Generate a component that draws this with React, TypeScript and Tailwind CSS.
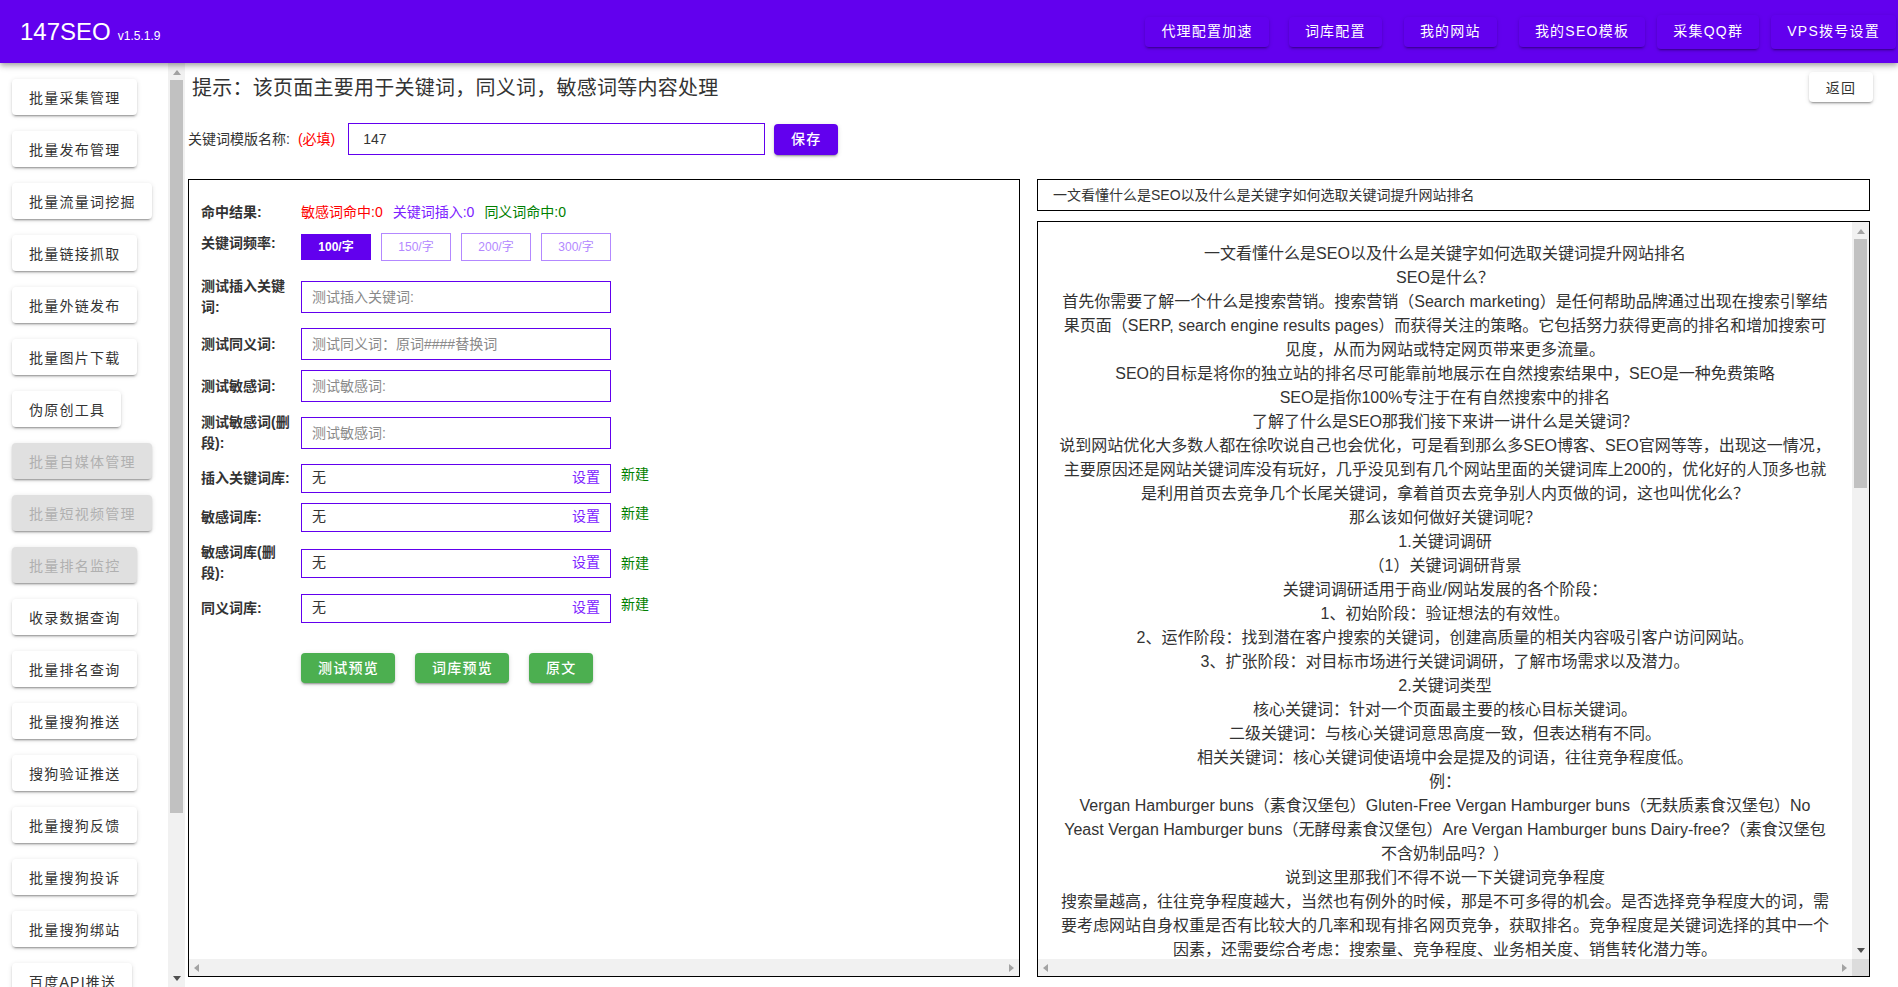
import React from "react";

const raised =
  "shadow-[0_3px_1px_-2px_rgba(0,0,0,0.2),0_2px_2px_0_rgba(0,0,0,0.14),0_1px_5px_0_rgba(0,0,0,0.12)]";

const sideItems: [string, boolean][] = [
  ["批量采集管理", false],
  ["批量发布管理", false],
  ["批量流量词挖掘", false],
  ["批量链接抓取", false],
  ["批量外链发布", false],
  ["批量图片下载", false],
  ["伪原创工具", false],
  ["批量自媒体管理", true],
  ["批量短视频管理", true],
  ["批量排名监控", true],
  ["收录数据查询", false],
  ["批量排名查询", false],
  ["批量搜狗推送", false],
  ["搜狗验证推送", false],
  ["批量搜狗反馈", false],
  ["批量搜狗投诉", false],
  ["批量搜狗绑站", false],
  ["百度API推送", false],
];

const paragraphs = [
  "一文看懂什么是SEO以及什么是关键字如何选取关键词提升网站排名",
  "SEO是什么？",
  "首先你需要了解一个什么是搜索营销。搜索营销（Search marketing）是任何帮助品牌通过出现在搜索引擎结果页面（SERP, search engine results pages）而获得关注的策略。它包括努力获得更高的排名和增加搜索可见度，从而为网站或特定网页带来更多流量。",
  "SEO的目标是将你的独立站的排名尽可能靠前地展示在自然搜索结果中，SEO是一种免费策略",
  "SEO是指你100%专注于在有自然搜索中的排名",
  "了解了什么是SEO那我们接下来讲一讲什么是关键词？",
  "说到网站优化大多数人都在徐吹说自己也会优化，可是看到那么多SEO博客、SEO官网等等，出现这一情况，主要原因还是网站关键词库没有玩好，几乎没见到有几个网站里面的关键词库上200的，优化好的人顶多也就是利用首页去竞争几个长尾关键词，拿着首页去竞争别人内页做的词，这也叫优化么？",
  "那么该如何做好关键词呢？",
  "1.关键词调研",
  "（1）关键词调研背景",
  "关键词调研适用于商业/网站发展的各个阶段：",
  "1、初始阶段：验证想法的有效性。",
  "2、运作阶段：找到潜在客户搜索的关键词，创建高质量的相关内容吸引客户访问网站。",
  "3、扩张阶段：对目标市场进行关键词调研，了解市场需求以及潜力。",
  "2.关键词类型",
  "核心关键词：针对一个页面最主要的核心目标关键词。",
  "二级关键词：与核心关键词意思高度一致，但表达稍有不同。",
  "相关关键词：核心关键词使语境中会是提及的词语，往往竞争程度低。",
  "例：",
  "Vergan Hamburger buns（素食汉堡包）Gluten-Free Vergan Hamburger buns（无麸质素食汉堡包）No Yeast Vergan Hamburger buns（无酵母素食汉堡包）Are Vergan Hamburger buns Dairy-free?（素食汉堡包不含奶制品吗？）",
  "说到这里那我们不得不说一下关键词竞争程度",
  "搜索量越高，往往竞争程度越大，当然也有例外的时候，那是不可多得的机会。是否选择竞争程度大的词，需要考虑网站自身权重是否有比较大的几率和现有排名网页竞争，获取排名。竞争程度是关键词选择的其中一个因素，还需要综合考虑：搜索量、竞争程度、业务相关度、销售转化潜力等。",
];

function Arrow({ dir, dark }: { dir: "up" | "down" | "left" | "right"; dark?: boolean }) {
  const pts = {
    up: "4,2 0,7 8,7",
    down: "0,1 8,1 4,6",
    left: "6,0 6,8 1,4",
    right: "2,0 2,8 7,4",
  }[dir];
  return (
    <svg width="8" height="8" viewBox="0 0 8 8" className="block">
      <polygon points={pts} fill={dark ? "#505050" : "#a3a3a3"} />
    </svg>
  );
}

function VBar({ thumb, grow, downDark, upDark }: { thumb: number; grow?: boolean; downDark?: boolean; upDark?: boolean }) {
  return (
    <div className={`w-[17px] shrink-0 bg-[#f1f1f1] flex flex-col ${grow ? "h-full" : ""}`}>
      <div className="h-[17px] shrink-0 flex items-center justify-center">
        <Arrow dir="up" dark={upDark} />
      </div>
      <div className="flex-1 min-h-0 px-[2px]">
        <div className="bg-[#c1c1c1] w-full" style={{ height: thumb }} />
      </div>
      <div className="h-[17px] shrink-0 flex items-center justify-center">
        <Arrow dir="down" dark={downDark} />
      </div>
    </div>
  );
}

function HBar({ corner }: { corner?: boolean }) {
  return (
    <div className="h-[17px] shrink-0 flex">
      <div className="flex-1 bg-[#f1f1f1] flex items-center justify-between px-1">
        <Arrow dir="left" />
        <Arrow dir="right" />
      </div>
      {corner && <div className="w-[17px] bg-[#dcdcdc]" />}
    </div>
  );
}

function Label({ children }: { children: React.ReactNode }) {
  return <div className="w-[95px] mr-[5px] shrink-0 text-[14px] leading-[21px] font-bold text-[#333333]">{children}</div>;
}

function TestRow({ label, placeholder }: { label: string; placeholder: string }) {
  return (
    <div className="flex items-center">
      <Label>{label}</Label>
      <input
        placeholder={placeholder}
        className="w-[310px] h-[32px] border border-[#6200ee] px-[10px] text-[14px] text-[#333333] outline-none placeholder:text-[#8a8a8a]"
      />
    </div>
  );
}

function LibRow({ label, center }: { label: string; center?: boolean }) {
  return (
    <div className={`flex ${center ? "items-center" : "items-start"}`}>
      <div className="self-center">
        <Label>{label}</Label>
      </div>
      <div className="self-center w-[310px] h-[29px] border border-[#6200ee] px-[10px] pb-[2px] flex items-center justify-between text-[14px] shrink-0">
        <span className="text-[#333333]">无</span>
        <span className="text-[#7c22ff]">设置</span>
      </div>
      <span className="ml-[10px] text-[14px] leading-[21px] text-[#008000]">新建</span>
    </div>
  );
}

function Freq({ text, active }: { text: string; active?: boolean }) {
  return active ? (
    <div className="w-[70px] h-[26px] bg-[#6200ee] text-white text-[12px] font-bold flex items-center justify-center">{text}</div>
  ) : (
    <div className="w-[70px] h-[28px] border border-[#b388ff] text-[#b388ff] text-[12px] flex items-center justify-center">{text}</div>
  );
}

function Green({ text }: { text: string }) {
  return (
    <button className={`h-[30px] pl-[17px] pr-[16px] pt-[1px] rounded bg-[#4caf50] text-white text-[14px] font-medium tracking-[0.0892857em] ${raised}`}>{text}</button>
  );
}

export default function App() {
  return (
    <div className="h-screen overflow-hidden flex flex-col bg-white text-[#333333] font-['Liberation_Sans','Noto_Sans_CJK_SC',sans-serif]">
      <header className="relative z-10 h-[63px] shrink-0 bg-[#6200ee] text-white flex items-center justify-between pl-[20px] pr-[2px] shadow-[0_2px_4px_-1px_rgba(0,0,0,0.2),0_4px_5px_0_rgba(0,0,0,0.14),0_1px_10px_0_rgba(0,0,0,0.12)]">
        <div className="flex items-baseline">
          <span className="text-[24px] leading-none">147SEO</span>
          <span className="ml-[7px] text-[12px] leading-none">v1.5.1.9</span>
        </div>
        <nav className="flex items-center gap-[12px] text-[14px] tracking-[0.0892857em]">
          <button className={`h-[30px] px-[16px] mr-[8px] rounded bg-[#6200ee] ${raised}`}>代理配置加速</button>
          <button className={`h-[30px] px-[16px] mr-[10px] rounded bg-[#6200ee] ${raised}`}>词库配置</button>
          <button className={`h-[30px] px-[16px] mr-[10px] rounded bg-[#6200ee] ${raised}`}>我的网站</button>
          <button className={`h-[30px] px-[16px] rounded bg-[#6200ee] ${raised}`}>我的SEO模板</button>
          <button className={`h-[34px] px-[16px] rounded bg-[#6200ee] ${raised}`}>采集QQ群</button>
          <button className={`h-[34px] px-[16px] rounded bg-[#6200ee] ${raised}`}>VPS拨号设置</button>
        </nav>
      </header>

      <div className="flex flex-1 min-h-0">
        <aside className="w-[185px] shrink-0 flex">
          <div className="w-[168px] overflow-hidden flex flex-col items-start gap-[16px] pl-[12px] pt-[16px]">
            {sideItems.map(([t, off]) => (
              <button
                key={t}
                className={`h-[36px] shrink-0 pl-[17px] pr-[16px] pt-[2px] rounded text-[14px] tracking-[0.0892857em] whitespace-nowrap ${raised} ${
                  off ? "bg-[#e0e0e0] text-[#b0b0b0]" : "bg-white text-[#333333]"
                }`}
              >
                {t}
              </button>
            ))}
          </div>
          <VBar thumb={733} grow upDark={false} downDark />
        </aside>

        <main className="flex-1 min-w-0 flex flex-col pb-[10px]">
          <div className="flex items-center justify-between h-[30px] mt-[9px] pl-[7px] pr-[25px]">
            <div className="pt-[2px] text-[20px] tracking-[0.0125em] text-[#333333]">提示：该页面主要用于关键词，同义词，敏感词等内容处理</div>
            <button className={`w-[64px] h-[30px] pt-[2px] rounded bg-white text-[14px] tracking-[0.0892857em] ${raised}`}>返回</button>
          </div>

          <div className="flex items-center mt-[21px] pl-[3px] text-[14px]">
            <span>关键词模版名称:</span>
            <span className="ml-[8px] text-[#ff0000]">(必填)</span>
            <input
              defaultValue="147"
              className="ml-[13px] w-[417px] h-[32px] border border-[#6200ee] px-[14px] text-[14px] text-[#333333] outline-none"
            />
            <button className={`ml-[9px] w-[64px] h-[31px] rounded bg-[#6200ee] text-white font-medium tracking-[0.0892857em] ${raised}`}>保存</button>
          </div>

          <div className="flex-1 min-h-0 flex mt-[24px] pl-[3px] pr-[28px] gap-[17px]">
            <section className="w-[832px] shrink-0 border border-black flex flex-col">
              <div className="flex-1 min-h-0 overflow-hidden pl-[12px] pt-[22px] flex flex-col gap-[10px]">
                <div className="flex items-center">
                  <Label>命中结果:</Label>
                  <div className="flex gap-[10px] text-[14px] leading-[21px]">
                    <span className="text-[#ff0000]">敏感词命中:0</span>
                    <span className="text-[#7c22ff]">关键词插入:0</span>
                    <span className="text-[#008000]">同义词命中:0</span>
                  </div>
                </div>
                <div className="flex items-start mb-[5px]">
                  <Label>关键词频率:</Label>
                  <div className="flex items-center gap-[10px]">
                    <Freq text="100/字" active />
                    <Freq text="150/字" />
                    <Freq text="200/字" />
                    <Freq text="300/字" />
                  </div>
                </div>
                <TestRow label="测试插入关键词:" placeholder="测试插入关键词:" />
                <TestRow label="测试同义词:" placeholder="测试同义词：原词####替换词" />
                <TestRow label="测试敏感词:" placeholder="测试敏感词:" />
                <TestRow label="测试敏感词(删段):" placeholder="测试敏感词:" />
                <LibRow label="插入关键词库:" />
                <LibRow label="敏感词库:" />
                <LibRow label="敏感词库(删段):" center />
                <LibRow label="同义词库:" />
                <div className="flex gap-[20px] ml-[100px] mt-[20px]">
                  <Green text="测试预览" />
                  <Green text="词库预览" />
                  <Green text="原文" />
                </div>
              </div>
              <HBar />
            </section>

            <section className="flex-1 min-w-0 flex flex-col gap-[10px]">
              <div className="h-[32px] shrink-0 border border-black flex items-center pl-[15px] text-[14px]">
                一文看懂什么是SEO以及什么是关键字如何选取关键词提升网站排名
              </div>
              <div className="flex-1 min-h-0 border border-black flex flex-col">
                <div className="flex-1 min-h-0 flex">
                  <div className="flex-1 min-w-0 overflow-hidden px-[20px] pt-[20px] text-center text-[16px] leading-[24px] text-[#333333]">
                    {paragraphs.map((p, i) => (
                      <p key={i}>{p}</p>
                    ))}
                  </div>
                  <VBar thumb={249} downDark />
                </div>
                <HBar corner />
              </div>
            </section>
          </div>
        </main>
      </div>
    </div>
  );
}
